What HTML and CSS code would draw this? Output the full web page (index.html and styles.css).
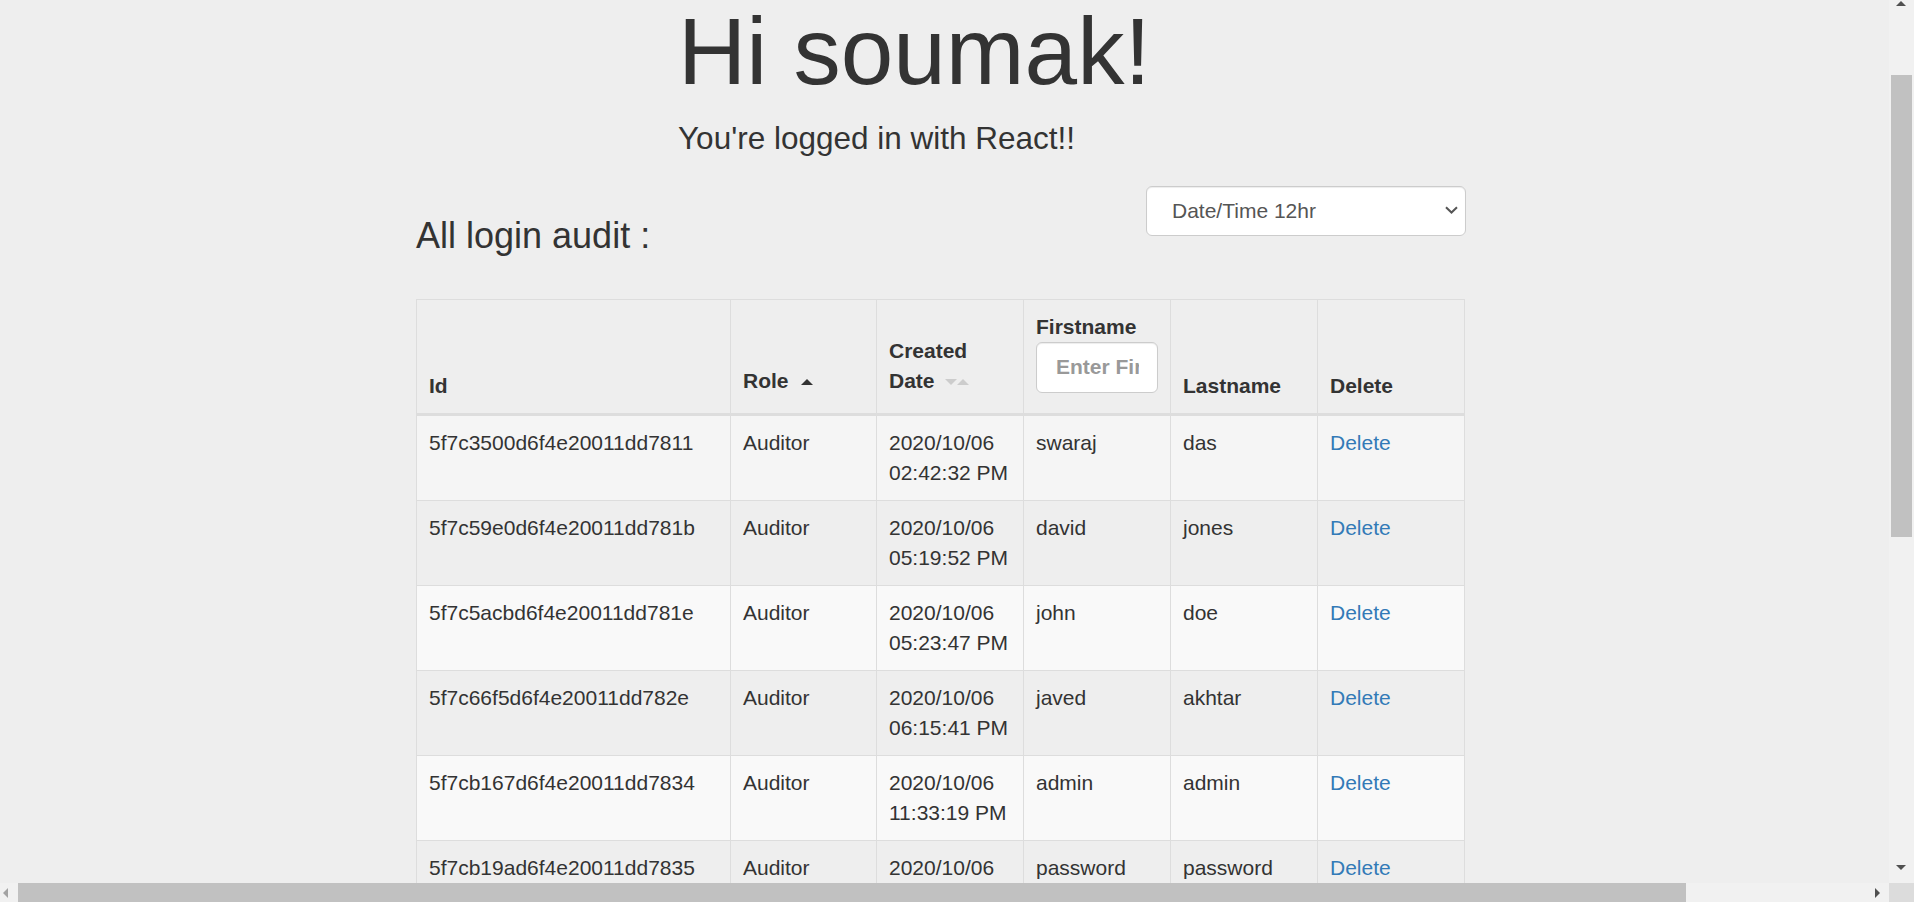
FILE: index.html
```html
<!DOCTYPE html>
<html lang="en">
<head>
<meta charset="utf-8">
<title>Login audit</title>
<link rel="stylesheet" href="styles.css">
</head>
<body>
<main class="page">
  <section class="hello">
    <h1>Hi soumak!</h1>
    <p class="lead">You're logged in with React!!</p>
  </section>

  <div class="toolbar">
    <h3>All login audit :</h3>
    <div class="picker">
      <select>
        <option>Date/Time 12hr</option>
        <option>Date/Time 24hr</option>
      </select>
      <svg viewBox="0 0 13 8" aria-hidden="true"><path d="M1 1.2 L6.5 6.5 L12 1.2" fill="none" stroke="#555" stroke-width="2"/></svg>
    </div>
  </div>

  <table class="audit">
    <colgroup>
      <col class="c-id"><col class="c-role"><col class="c-date"><col class="c-first"><col class="c-last"><col class="c-del">
    </colgroup>
    <thead>
      <tr>
        <th>Id</th>
        <th class="sortable">Role<span class="caret up dark"></span></th>
        <th class="sortable">Created Date<span class="caret down light first"></span><span class="caret up light pair"></span></th>
        <th><label class="filter-label">Firstname</label><input class="filter" type="text" placeholder="Enter Firstname..."></th>
        <th>Lastname</th>
        <th>Delete</th>
      </tr>
    </thead>
    <tbody>
      <tr class="hover">
        <td>5f7c3500d6f4e20011dd7811</td><td>Auditor</td><td>2020/10/06 02:42:32 PM</td><td>swaraj</td><td>das</td><td><a href="#">Delete</a></td>
      </tr>
      <tr>
        <td>5f7c59e0d6f4e20011dd781b</td><td>Auditor</td><td>2020/10/06 05:19:52 PM</td><td>david</td><td>jones</td><td><a href="#">Delete</a></td>
      </tr>
      <tr class="odd">
        <td>5f7c5acbd6f4e20011dd781e</td><td>Auditor</td><td>2020/10/06 05:23:47 PM</td><td>john</td><td>doe</td><td><a href="#">Delete</a></td>
      </tr>
      <tr>
        <td>5f7c66f5d6f4e20011dd782e</td><td>Auditor</td><td>2020/10/06 06:15:41 PM</td><td>javed</td><td>akhtar</td><td><a href="#">Delete</a></td>
      </tr>
      <tr class="odd">
        <td>5f7cb167d6f4e20011dd7834</td><td>Auditor</td><td>2020/10/06 11:33:19 PM</td><td>admin</td><td>admin</td><td><a href="#">Delete</a></td>
      </tr>
      <tr>
        <td>5f7cb19ad6f4e20011dd7835</td><td>Auditor</td><td>2020/10/06 11:35:02 PM</td><td>password</td><td>password</td><td><a href="#">Delete</a></td>
      </tr>
    </tbody>
  </table>
</main>

<div class="vbar" aria-hidden="true">
  <span class="arrow arrow-up"></span>
  <span class="vthumb"></span>
  <span class="arrow arrow-down"></span>
</div>
<div class="hbar" aria-hidden="true">
  <span class="arrow arrow-left"></span>
  <span class="hthumb"></span>
  <span class="arrow arrow-right"></span>
</div>
<div class="corner" aria-hidden="true"></div>
</body>
</html>
```

FILE: styles.css
```css
html, body {
  margin: 0;
  height: 100%;
  overflow: hidden;
  background: #eeeeee;
}

body {
  font-family: "Liberation Sans", Arial, Helvetica, sans-serif;
  font-size: 21px;
  line-height: 30px;
  color: #333333;
}

.page {
  width: 1048px;
  margin-left: 416px;
}

.hello {
  margin-left: 262px;
}

.hello h1 {
  margin: 0;
  font-size: 94.5px;
  line-height: 1.1;
  font-weight: normal;
}

.hello .lead {
  margin: 12px 0 0;
  font-size: 31.5px;
  line-height: 45px;
}

.toolbar {
  display: flex;
  justify-content: space-between;
  align-items: flex-start;
  margin-top: 25px;
}

.toolbar h3 {
  margin: 30px 0 0;
  font-size: 36px;
  line-height: 39.6px;
  font-weight: normal;
}

.picker {
  position: relative;
  width: 320px;
  height: 50px;
  margin-right: -2px;
}

.picker select {
  -webkit-appearance: none;
  appearance: none;
  width: 100%;
  height: 100%;
  box-sizing: border-box;
  border: 1px solid #cccccc;
  border-radius: 6px;
  background: #ffffff;
  font-family: inherit;
  font-size: 21px;
  color: #555555;
  padding: 0 40px 0 25px;
  box-shadow: inset 0 1px 1px rgba(0, 0, 0, 0.075);
  outline: none;
}

.picker svg {
  position: absolute;
  right: 8px;
  top: 20px;
  width: 13px;
  height: 8px;
  pointer-events: none;
}

.audit {
  margin-top: 43.4px;
  width: 1048px;
  border-collapse: collapse;
  table-layout: fixed;
  border: 1px solid #dddddd;
}

.c-id { width: 314px; }
.c-role { width: 146px; }
.c-date, .c-first, .c-last, .c-del { width: 147px; }

.audit th,
.audit td {
  border: 1px solid #dddddd;
  padding: 12px;
  text-align: left;
  line-height: 30px;
}

.audit th {
  vertical-align: bottom;
  font-weight: bold;
  border-bottom: 3px solid #dddddd;
}

.audit th.sortable {
  padding-bottom: 17px;
}

.audit td {
  vertical-align: top;
}

.audit tr.hover td { background: #f5f5f5; }
.audit tr.odd td { background: #f9f9f9; }

.audit a {
  color: #337ab7;
  text-decoration: none;
}

.filter-label {
  display: block;
}

.filter {
  display: block;
  box-sizing: border-box;
  width: 100%;
  height: 51px;
  margin: 0 0 8px;
  padding: 0 18px 0 19px;
  border: 1px solid #cccccc;
  border-radius: 6px;
  background: #ffffff;
  font-family: inherit;
  font-size: 21px;
  font-weight: bold;
  color: #555555;
  box-shadow: inset 0 1px 1px rgba(0, 0, 0, 0.075);
  outline: none;
}

.filter::placeholder {
  color: #999999;
}

.caret {
  display: inline-block;
  width: 0;
  height: 0;
  vertical-align: middle;
  border-left: 6px solid transparent;
  border-right: 6px solid transparent;
}

.caret.up { border-bottom: 6px solid #333333; }
.caret.down { border-top: 6px solid #333333; }
.caret.dark { margin-left: 12px; }
.caret.light.up { border-bottom-color: #cccccc; }
.caret.light.down { border-top-color: #cccccc; }
.caret.first { margin-left: 10px; }
.caret.pair { margin-left: 0; }

/* fake browser scrollbars */
.vbar {
  position: fixed;
  top: 0;
  right: 0;
  width: 25px;
  height: 883px;
  background: #f1f1f1;
}

.vthumb {
  position: absolute;
  left: 2px;
  top: 75px;
  width: 21px;
  height: 462px;
  background: #c1c1c1;
}

.hbar {
  position: fixed;
  left: 0;
  bottom: 0;
  width: 1889px;
  height: 19px;
  background: #f1f1f1;
}

.hthumb {
  position: absolute;
  left: 18px;
  top: 0;
  width: 1668px;
  height: 19px;
  background: #c1c1c1;
}

.corner {
  position: fixed;
  right: 0;
  bottom: 0;
  width: 25px;
  height: 19px;
  background: #dcdcdc;
}

.arrow {
  position: absolute;
  width: 0;
  height: 0;
}

.arrow-up {
  left: 7px;
  top: 1px;
  border-left: 5px solid transparent;
  border-right: 5px solid transparent;
  border-bottom: 5px solid #505050;
}

.arrow-down {
  left: 7px;
  top: 865px;
  border-left: 5px solid transparent;
  border-right: 5px solid transparent;
  border-top: 5px solid #505050;
}

.arrow-left {
  left: 3px;
  top: 5px;
  border-top: 5px solid transparent;
  border-bottom: 5px solid transparent;
  border-right: 5px solid #a3a3a3;
}

.arrow-right {
  left: 1875px;
  top: 5px;
  border-top: 5px solid transparent;
  border-bottom: 5px solid transparent;
  border-left: 5px solid #505050;
}
```
